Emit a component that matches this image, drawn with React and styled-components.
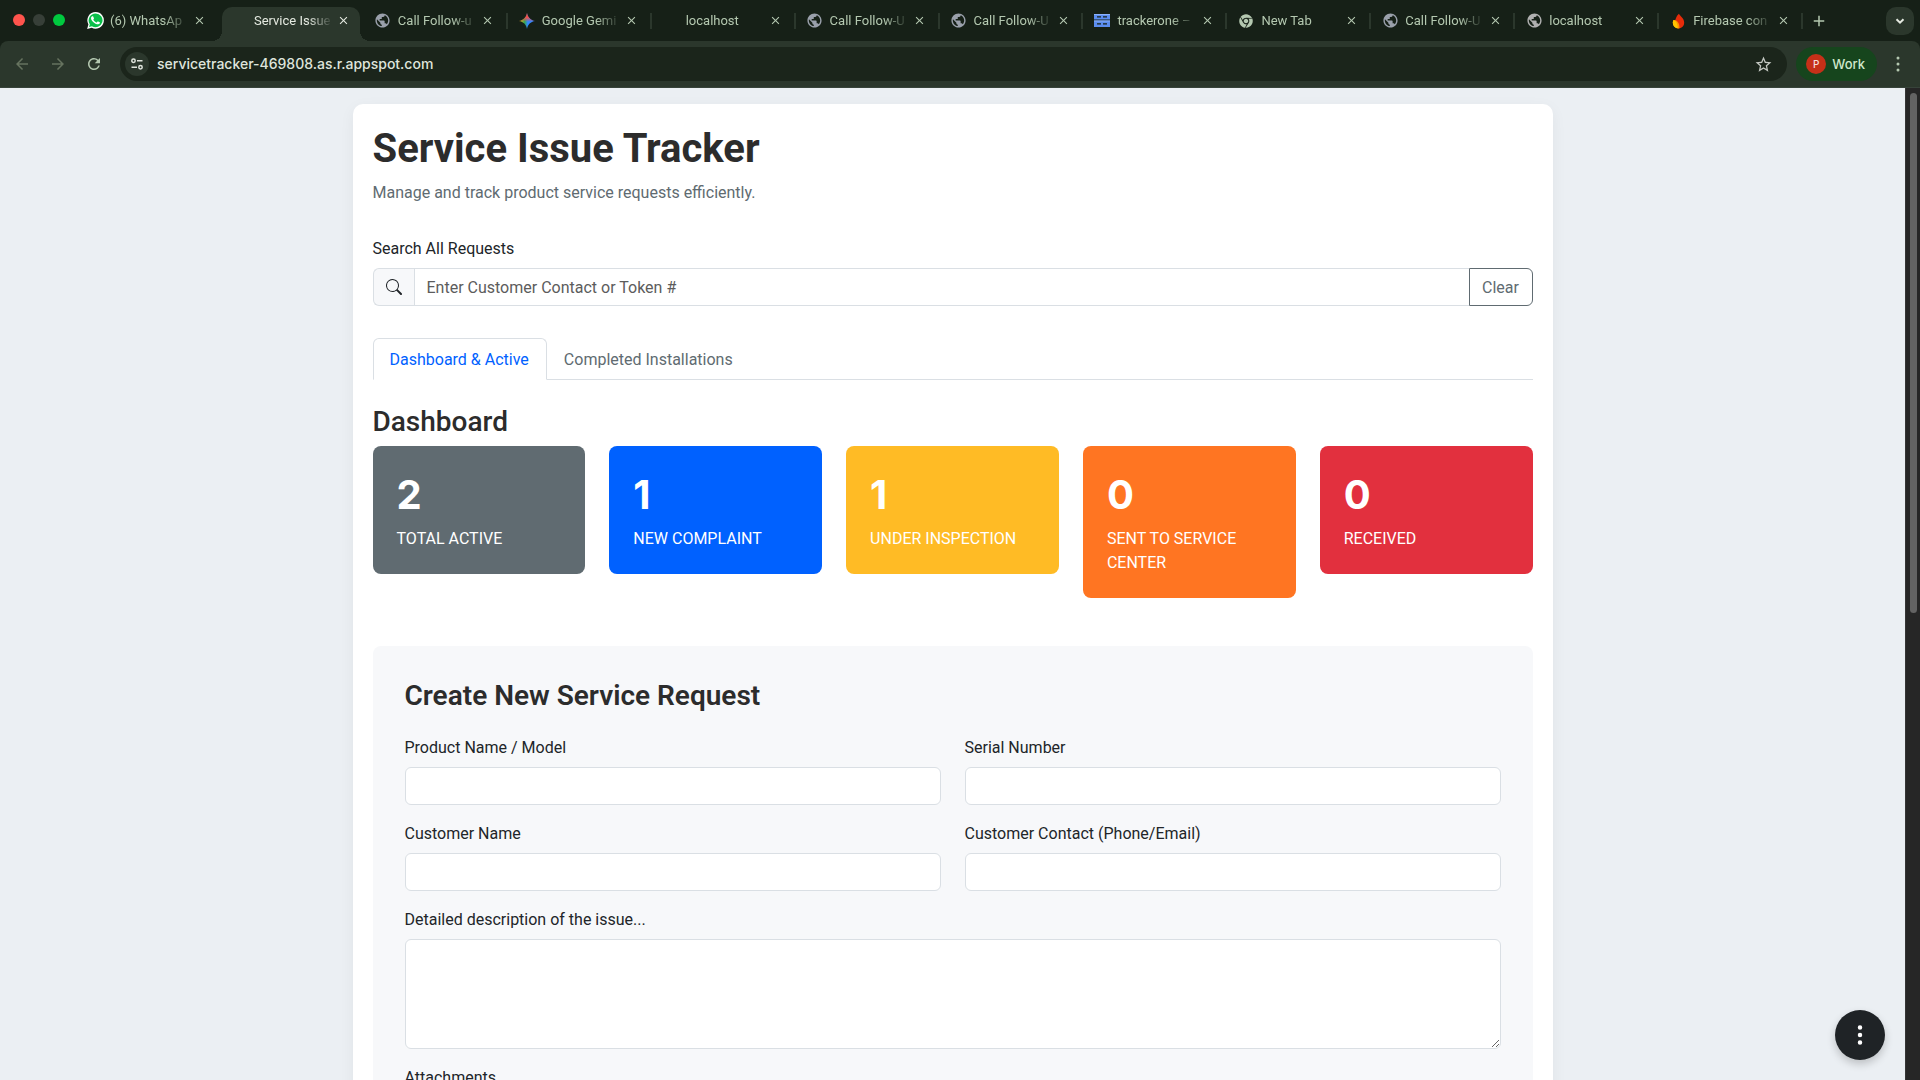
import React, { useState } from "react";
import styled, { createGlobalStyle, css } from "styled-components";
import { MdPublic, MdArrowBack, MdArrowForward, MdRefresh, MdStarBorder, MdClose, MdAdd } from "react-icons/md";
import { FaChrome } from "react-icons/fa";
import { BsSearch, BsThreeDotsVertical } from "react-icons/bs";

const GlobalStyle = createGlobalStyle`
  *, *::before, *::after { box-sizing: border-box; }
  body {
    margin: 0;
    overflow: hidden;
    background: #ebeff3;
    color: #212529;
    font-family: Roboto, Inter, "Liberation Sans", sans-serif;
    font-size: 16px;
    line-height: 24px;
  }
  button, input, textarea { font: inherit; color: inherit; margin: 0; }
  button { cursor: pointer; }
  svg { display: block; flex: none; }
`;

const Window = styled.div`
  display: flex;
  flex-direction: column;
  height: 100vh;
  background: #162017;
`;

/* ---------- tab strip ---------- */

const TabStrip = styled.div`
  display: flex;
  height: 41px;
  color: #b4c8b0;
`;

const Lights = styled.div`
  display: flex;
  flex: none;
  gap: 8px;
  width: 76px;
  padding: 14px 0 0 13px;
`;

const Light = styled.span`
  width: 12px;
  height: 12px;
  border-radius: 50%;
  background: ${(p) => p.$color};
`;

const Tabs = styled.div`
  display: flex;
  flex: 1;
  min-width: 0;
`;

const TabCell = styled.div`
  position: relative;
  display: flex;
  flex: 1 1 0;
  min-width: 0;
  align-items: center;
  padding: 0 12px 0 10px;
  ${(p) =>
    p.$divided &&
    css`
      &::after {
        content: "";
        position: absolute;
        right: 0;
        top: 13px;
        width: 2px;
        height: 16px;
        background: #2b372c;
      }
    `}
  ${(p) =>
    p.$active &&
    css`
      color: #e4e9e0;
      &::before {
        content: "";
        position: absolute;
        inset: 7px 4px 0 2px;
        border-radius: 10px 10px 0 0;
        background: #2b372c;
      }
    `}
`;

const Flare = styled.span`
  position: absolute;
  bottom: 0;
  width: 10px;
  height: 10px;
  ${(p) =>
    p.$side === "left"
      ? "left: -8px; background: radial-gradient(circle at 0 0, transparent 10px, #2b372c 10px);"
      : "right: -6px; background: radial-gradient(circle at 100% 0, transparent 10px, #2b372c 10px);"}
`;

const TabButton = styled.button`
  position: relative;
  display: flex;
  flex: 1;
  min-width: 0;
  align-items: center;
  gap: 6px;
  padding: 0;
  border: 0;
  background: none;
  font-size: 13px;
  line-height: 20px;
  text-align: left;
`;

const Favicon = styled.span`
  display: flex;
  flex: none;
  align-items: center;
  justify-content: center;
  width: 18px;
  height: 18px;
`;

const TabTitle = styled.span`
  flex: none;
  width: 80px;
  white-space: nowrap;
  mask-image: linear-gradient(90deg, #000 54px, transparent 79px);
`;

const IconButton = styled.button`
  position: relative;
  display: flex;
  flex: none;
  align-items: center;
  justify-content: center;
  width: ${(p) => p.$size}px;
  height: ${(p) => p.$size}px;
  padding: 0;
  border: 0;
  border-radius: ${(p) => p.$radius || "50%"};
  background: ${(p) => p.$fill || "none"};
  color: ${(p) => p.$color || "inherit"};
`;

const StripEnd = styled.div`
  display: flex;
  flex: none;
  align-items: center;
  justify-content: space-between;
  width: 117px;
  padding: 0 6px;
`;

/* ---------- toolbar ---------- */

const Toolbar = styled.div`
  display: flex;
  flex: none;
  align-items: center;
  height: 47px;
  padding: 0 12px 0 8px;
  border-bottom: 1px solid #37433a;
  border-radius: 8px 8px 0 0;
  background: #2b372c;
  color: #b4c8b0;
  font-family: Inter, Roboto, sans-serif;
`;

const NavButtons = styled.div`
  display: flex;
  gap: 8px;
  margin-right: 12px;
`;

const AddressBar = styled.div`
  display: flex;
  flex: 1;
  align-items: center;
  gap: 8px;
  height: 34px;
  padding: 0 10px 0 5px;
  border-radius: 17px;
  background: #1b251b;
`;

const AddressInput = styled.input`
  flex: 1;
  min-width: 0;
  padding: 0;
  border: 0;
  outline: 0;
  background: none;
  color: #dfe4dc;
  font-size: 14px;
  font-weight: 500;
  line-height: 20px;
`;

const Profile = styled.button`
  display: flex;
  align-items: center;
  gap: 6px;
  height: 34px;
  margin: 0 11px 0 9px;
  padding: 0 12px 0 10px;
  border: 0;
  border-radius: 17px;
  background: #16451d;
  color: #cfe8cb;
  font-size: 13px;
  font-weight: 500;
  line-height: 20px;
`;

const Avatar = styled.span`
  width: 20px;
  height: 20px;
  border-radius: 50%;
  background: #c53018;
  color: #f6ded9;
  font-size: 10px;
  text-align: center;
`;

/* ---------- page ---------- */

const Viewport = styled.div`
  position: relative;
  display: flex;
  flex: 1;
  min-height: 0;
  background: #ebeff3;
`;

const Page = styled.main`
  flex: 1;
  min-width: 0;
  overflow: hidden;
  padding: 16px 20px;
`;

const ScrollTrack = styled.div`
  flex: none;
  width: 15px;
  padding: 5px 3px 5px 4px;
  border-left: 1px solid #353535;
  background: #262626;
`;

const ScrollThumb = styled.div`
  height: 53%;
  border-radius: 4px;
  background: #636363;
`;

const Card = styled.div`
  max-width: 1200px;
  margin: 0 auto;
  padding: 20px;
  border-radius: 10px;
  background: #fff;
  box-shadow: 0 4px 15px rgba(0, 0, 0, 0.05);
`;

const Title = styled.h1`
  margin: 0 0 6px;
  color: #2c2c2c;
  font-size: 40px;
  font-weight: 700;
  line-height: 50px;
`;

const Lead = styled.p`
  margin: 0 0 30px;
  color: #606b71;
  line-height: 26px;
`;

const Label = styled.label`
  display: block;
  margin-bottom: 6px;
  line-height: 26px;
`;

const control = css`
  border: 1px solid #dadfe4;
  border-radius: 6px;
  background: #fff;
  outline: 0;
`;

const SearchGroup = styled.div`
  display: flex;
  height: 38px;
  margin-bottom: 32px;
`;

const SearchIcon = styled.span`
  ${control}
  display: flex;
  align-items: center;
  width: 41px;
  padding: 0 12px;
  border-right: 0;
  border-radius: 6px 0 0 6px;
  background: #f7f8fa;
`;

const SearchInput = styled.input`
  ${control}
  flex: 1;
  min-width: 0;
  padding: 7px 12px 5px;
  border-right: 0;
  border-radius: 0;
  &::placeholder { color: #5c5c5c; opacity: 1; }
`;

const ClearButton = styled.button`
  width: 64px;
  padding: 7px 0 5px;
  border: 1px solid #606b71;
  border-radius: 0 6px 6px 0;
  background: #fff;
  color: #606b71;
`;

const PageTabs = styled.div`
  display: flex;
  margin-bottom: 24px;
  border-bottom: 1px solid #dadfe4;
`;

const PageTab = styled.button`
  margin-bottom: -1px;
  padding: 9px 17px 7px 16px;
  border: 1px solid transparent;
  border-radius: 6px 6px 0 0;
  background: none;
  color: #606b71;
  ${(p) =>
    p.$active &&
    css`
      border-color: #dadfe4 #dadfe4 #fff;
      background: #fff;
      color: #0061ff;
    `}
`;

const Heading = styled.h2`
  margin: 0 0 ${(p) => p.$space}px;
  padding-top: 1px;
  color: #2c2c2c;
  font-size: 28px;
  font-weight: ${(p) => p.$weight};
  line-height: 1.2;
`;

const Stats = styled.div`
  display: grid;
  grid-template-columns: repeat(5, 1fr);
  align-items: start;
  gap: 24px;
  margin-bottom: 48px;
`;

const Stat = styled.div`
  padding: 24px;
  border-radius: 8px;
  background: ${(p) => p.$color};
  color: #fff;
`;

const StatValue = styled.div`
  margin-bottom: 7px;
  font-family: Inter, Roboto, sans-serif;
  font-size: 40px;
  font-weight: 700;
  line-height: 50px;
`;

const StatLabel = styled.div`
  margin-bottom: -1px;
  text-transform: uppercase;
`;

const Form = styled.form`
  padding: 32px;
  border-radius: 8px;
  background: #f7f8fa;
`;

const Fields = styled.div`
  display: grid;
  grid-template-columns: 1fr 1fr;
  gap: 16px 24px;
`;

const Field = styled.div`
  grid-column: ${(p) => (p.$wide ? "1 / -1" : "auto")};
`;

const TextInput = styled.input`
  ${control}
  display: block;
  width: 100%;
  height: 38px;
  padding: 6px 12px;
`;

const TextArea = styled.textarea`
  ${control}
  display: block;
  width: 100%;
  height: 110px;
  padding: 6px 12px;
  resize: vertical;
`;

const Fab = styled.button`
  position: absolute;
  right: 35px;
  bottom: 20px;
  display: flex;
  align-items: center;
  justify-content: center;
  width: 50px;
  height: 50px;
  padding: 0;
  border: 0;
  border-radius: 50%;
  background: #1f2326;
  color: #fff;
  box-shadow: 0 4px 8px rgba(0, 0, 0, 0.2);
`;

/* ---------- icons ---------- */

const WhatsAppIcon = () => (
  <svg width="17" height="17" viewBox="0 0 24 24">
    <path fill="#fff" d="M12.2 0A11.8 11.8 0 0 0 2 17.7L.2 24l6.4-1.7A11.8 11.8 0 1 0 12.2 0z" />
    <path fill="#0ac04a" d="M12.2 2A9.8 9.8 0 0 0 4 17.2L2.9 21.1l4-1A9.8 9.8 0 1 0 12.2 2z" />
    <path fill="#fff" d="M17.6 14.4c-.3-.2-1.8-.9-2.1-1-.3-.1-.5-.2-.7.1-.2.3-.8 1-1 1.2-.2.2-.4.2-.7.1-1.3-.6-2.9-1.5-4.2-3.7-.2-.3 0-.5.1-.6l.5-.6c.2-.2.2-.4.3-.6 0-.2 0-.4 0-.5L8.900 6.600c-.3-.6-.5-.6-.7-.6h-.6c-.2 0-.5.1-.8.4C6.500 6.700 5.700 7.400 5.700 8.900c0 1.500 1.100 2.900 1.200 3.100.2.2 2.100 3.200 5.100 4.500 2.600 1.100 3.500.9 4.100.7.7-.1 1.800-.7 2-1.400.3-.7.3-1.300.2-1.400z" />
  </svg>
);

const GeminiIcon = () => (
  <svg width="16" height="16" viewBox="0 0 24 24">
    <defs>
      <linearGradient id="gem-base" x1="0" y1="0.5" x2="1" y2="0.5">
        <stop offset="0" stopColor="#fbbc04" />
        <stop offset="0.35" stopColor="#34a853" />
        <stop offset="0.55" stopColor="#3186ff" />
        <stop offset="1" stopColor="#3186ff" />
      </linearGradient>
      <linearGradient id="gem-top" x1="0.5" y1="0" x2="0.5" y2="0.55">
        <stop offset="0" stopColor="#f03e36" />
        <stop offset="0.5" stopColor="#f4504a" />
        <stop offset="1" stopColor="#f4504a" stopOpacity="0" />
      </linearGradient>
    </defs>
    <path fill="url(#gem-base)" d="M12 0c1 6.500 5.500 11 12 12-6.500 1-11 5.500-12 12C11 17.500 6.500 13 0 12 6.500 11 11 6.500 12 0z" />
    <path fill="url(#gem-top)" d="M12 0c1 6.500 5.500 11 12 12-6.500 1-11 5.500-12 12C11 17.500 6.500 13 0 12 6.500 11 11 6.500 12 0z" />
  </svg>
);

const ServerIcon = () => (
  <svg width="16" height="13" viewBox="0 0 16 13">
    <path fill="#5b8def" d="M0 0h16v5.500H0zM0 6.500h16V13H0z" />
    <path fill="#8cb2fa" d="M0 0h16v1H0zM0 6.500h16v1H0z" />
    <path fill="#162017" d="M3 2.200h4v1.300H3zM9 2.200h4v1.300H9zM3 9.300h4v1.300H3zM9 9.300h4v1.300H9z" />
  </svg>
);

const FirebaseIcon = () => (
  <svg width="13" height="16" viewBox="0 0 13 16">
    <path fill="#e62c0a" d="M7 .8c.5 1.700 5.200 4.400 5.200 8.900A5.700 5.700 0 0 1 6.500 15.500 5.700 5.700 0 0 1 2 12C3 8 4 3 7 .8z" />
    <path fill="#ff9100" d="M1.500 7c2.800-.4 6.300 2.500 6 8.300A5.700 5.700 0 0 1 .8 9.800c0-1 .3-2 .7-2.800z" />
    <path fill="#ffc400" d="M1.500 7c2.600 1 4.300 3.600 4.200 8.400A5.700 5.700 0 0 1 .8 9.800c0-1 .3-2 .7-2.800z" />
  </svg>
);

const TuneIcon = () => (
  <svg width="14" height="14" viewBox="0 0 14 14" fill="none" stroke="currentColor" strokeWidth="1.5">
    <circle cx="3.5" cy="3.8" r="1.7" />
    <path d="M7 3.800h5.500M1.500 10.200H7" />
    <circle cx="10.5" cy="10.2" r="1.7" />
  </svg>
);

const ChevronIcon = () => (
  <svg width="10" height="10" viewBox="0 0 10 10" fill="none" stroke="currentColor" strokeWidth="2">
    <path d="M1.500 3.200L5 6.700l3.500-3.500" />
  </svg>
);

const KebabIcon = () => (
  <svg width="16" height="16" viewBox="0 0 16 16" fill="currentColor">
    <circle cx="8" cy="2" r="1.5" />
    <circle cx="8" cy="8" r="1.5" />
    <circle cx="8" cy="14" r="1.5" />
  </svg>
);

const Globe = () => <MdPublic size={17} color="#9aa0ab" />;

const browserTabs = [
  { title: "(6) WhatsAp", icon: <WhatsAppIcon /> },
  { title: "Service Issue", active: true },
  { title: "Call Follow-u", icon: <Globe />, divided: true },
  { title: "Google Gemi", icon: <GeminiIcon />, divided: true },
  { title: "localhost", divided: true },
  { title: "Call Follow-U", icon: <Globe />, divided: true },
  { title: "Call Follow-U", icon: <Globe />, divided: true },
  { title: "trackerone –", icon: <ServerIcon />, divided: true },
  { title: "New Tab", icon: <FaChrome size={14} />, divided: true },
  { title: "Call Follow-U", icon: <Globe />, divided: true },
  { title: "localhost", icon: <MdPublic size={17} color="#b0b0b0" />, divided: true },
  { title: "Firebase con", icon: <FirebaseIcon />, divided: true },
];

const stats = [
  { value: 2, label: "Total Active", color: "#606b71" },
  { value: 1, label: "New Complaint", color: "#0061ff" },
  { value: 1, label: "Under Inspection", color: "#ffbb25" },
  { value: 0, label: "Sent to Service Center", color: "#ff7522" },
  { value: 0, label: "Received", color: "#e2303e" },
];

const fields = [
  { id: "product", label: "Product Name / Model" },
  { id: "serial", label: "Serial Number" },
  { id: "customer", label: "Customer Name" },
  { id: "contact", label: "Customer Contact (Phone/Email)" },
];

function BrowserChrome() {
  return (
    <>
      <TabStrip>
        <Lights>
          <Light $color="#ff544d" />
          <Light $color="#373f38" />
          <Light $color="#00c93f" />
        </Lights>
        <Tabs>
          {browserTabs.map((t, i) => (
            <TabCell key={i} $active={t.active} $divided={t.divided}>
              {t.active && (
                <>
                  <Flare $side="left" />
                  <Flare $side="right" />
                </>
              )}
              <TabButton>
                <Favicon>{t.icon}</Favicon>
                <TabTitle>{t.title}</TabTitle>
              </TabButton>
              <IconButton $size={16} aria-label="Close tab">
                <MdClose size={13} />
              </IconButton>
            </TabCell>
          ))}
        </Tabs>
        <StripEnd>
          <IconButton $size={20} aria-label="New tab">
            <MdAdd size={18} />
          </IconButton>
          <IconButton $size={28} $radius="10px" $fill="#2b372c" $color="#e4e9e0" aria-label="Search tabs">
            <ChevronIcon />
          </IconButton>
        </StripEnd>
      </TabStrip>
      <Toolbar>
        <NavButtons>
          <IconButton $size={28} $color="#66735f" aria-label="Back">
            <MdArrowBack size={18} />
          </IconButton>
          <IconButton $size={28} $color="#66735f" aria-label="Forward">
            <MdArrowForward size={18} />
          </IconButton>
          <IconButton $size={28} aria-label="Reload">
            <MdRefresh size={18} />
          </IconButton>
        </NavButtons>
        <AddressBar>
          <IconButton $size={24} $fill="#2b372c" $color="#dfe4dc" aria-label="Site information">
            <TuneIcon />
          </IconButton>
          <AddressInput aria-label="Address" defaultValue="servicetracker-469808.as.r.appspot.com" />
          <IconButton $size={28} $color="#c4c8c2" aria-label="Bookmark this tab">
            <MdStarBorder size={19} />
          </IconButton>
        </AddressBar>
        <Profile>
          <Avatar>P</Avatar>
          Work
        </Profile>
        <IconButton $size={20} aria-label="Browser menu">
          <KebabIcon />
        </IconButton>
      </Toolbar>
    </>
  );
}

export default function App() {
  const [query, setQuery] = useState("");
  const [tab, setTab] = useState("active");
  return (
    <Window>
      <GlobalStyle />
      <BrowserChrome />
      <Viewport>
        <Page>
          <Card>
            <Title>Service Issue Tracker</Title>
            <Lead>Manage and track product service requests efficiently.</Lead>
            <Label htmlFor="search">Search All Requests</Label>
            <SearchGroup>
              <SearchIcon>
                <BsSearch size={16} />
              </SearchIcon>
              <SearchInput
                id="search"
                value={query}
                onChange={(e) => setQuery(e.target.value)}
                placeholder="Enter Customer Contact or Token #"
              />
              <ClearButton type="button" onClick={() => setQuery("")}>
                Clear
              </ClearButton>
            </SearchGroup>
            <PageTabs role="tablist">
              <PageTab role="tab" $active={tab === "active"} onClick={() => setTab("active")}>
                Dashboard &amp; Active
              </PageTab>
              <PageTab role="tab" $active={tab === "completed"} onClick={() => setTab("completed")}>
                Completed Installations
              </PageTab>
            </PageTabs>
            <Heading $space={7} $weight={500}>
              Dashboard
            </Heading>
            <Stats>
              {stats.map((s) => (
                <Stat key={s.label} $color={s.color}>
                  <StatValue>{s.value}</StatValue>
                  <StatLabel>{s.label}</StatLabel>
                </Stat>
              ))}
            </Stats>
            <Form>
              <Heading $space={23} $weight={600}>
                Create New Service Request
              </Heading>
              <Fields>
                {fields.map((f) => (
                  <Field key={f.id}>
                    <Label htmlFor={f.id}>{f.label}</Label>
                    <TextInput id={f.id} />
                  </Field>
                ))}
                <Field $wide>
                  <Label htmlFor="description">Detailed description of the issue...</Label>
                  <TextArea id="description" />
                </Field>
                <Field $wide>
                  <Label htmlFor="attachments">Attachments</Label>
                  <TextInput id="attachments" type="file" />
                </Field>
              </Fields>
            </Form>
          </Card>
        </Page>
        <ScrollTrack>
          <ScrollThumb />
        </ScrollTrack>
        <Fab aria-label="More actions">
          <BsThreeDotsVertical size={24} />
        </Fab>
      </Viewport>
    </Window>
  );
}
